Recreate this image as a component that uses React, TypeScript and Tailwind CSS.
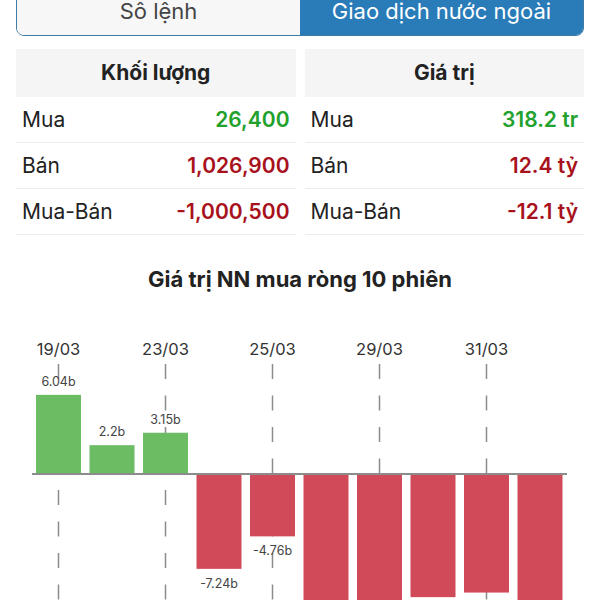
import React from 'react';

const volumeRows = [
  { label: 'Mua', value: '26,400', up: true },
  { label: 'Bán', value: '1,026,900', up: false },
  { label: 'Mua-Bán', value: '-1,000,500', up: false },
];

const valueRows = [
  { label: 'Mua', value: '318.2 tr', up: true },
  { label: 'Bán', value: '12.4 tỷ', up: false },
  { label: 'Mua-Bán', value: '-12.1 tỷ', up: false },
];

// net foreign buy value per session (billion)
const sessions = [6.04, 2.2, 3.15, -7.24, -4.76, -11.2, -11.6, -9.4, -9.05, -12.3];
const dates = ['19/03', '', '23/03', '', '25/03', '', '29/03', '', '31/03', ''];

const ZERO = 473;
const SCALE = 13.1;
const BAR_W = 45;

function StatTable({ title, rows }: { title: string; rows: typeof volumeRows }) {
  return (
    <div className="flex flex-col">
      <div className="h-[48px] bg-[#f5f5f5] flex items-center justify-center text-[21px] font-bold text-[#222]">
        {title}
      </div>
      {rows.map((r) => (
        <div key={r.label} className="h-[46px] flex items-center justify-between px-[6px] border-b border-[#ececec]">
          <span className="text-[21px] text-[#222]">{r.label}</span>
          <span className={`text-[21px] font-semibold ${r.up ? 'text-[#22a12c]' : 'text-[#a8121c]'}`}>{r.value}</span>
        </div>
      ))}
    </div>
  );
}

function NetChart() {
  return (
    <svg width="600" height="308" viewBox="0 292 600 308" className="block">
      {sessions.map((_, i) => {
        const cx = 36 + i * 53.5 + BAR_W / 2;
        if (!dates[i]) return null;
        return (
          <g key={'d' + i}>
            <text x={cx} y={354} textAnchor="middle" fontSize="16.5" fill="#333">
              {dates[i]}
            </text>
            <line x1={cx} x2={cx} y1={363} y2={600} stroke="#8c8c8c" strokeWidth="1.5" strokeDasharray="15 16.5" />
          </g>
        );
      })}
      {sessions.map((v, i) => {
        const x = 36 + i * 53.5;
        const h = Math.abs(v) * SCALE;
        const y = v >= 0 ? ZERO - h : ZERO;
        return (
          <rect key={'b' + i} x={x} y={y} width={BAR_W} height={h} fill={v >= 0 ? '#6cbc64' : '#d04a59'} />
        );
      })}
      <line x1={32} x2={567} y1={ZERO} y2={ZERO} stroke="#8c8c8c" strokeWidth="2" />
      {sessions.map((v, i) => {
        const cx = 36 + i * 53.5 + BAR_W / 2;
        const h = Math.abs(v) * SCALE;
        const y = v >= 0 ? ZERO - h - 9 : ZERO + h + 19;
        if (y > 596) return null; // below the visible area
        return (
          <text key={'l' + i} x={cx} y={y} textAnchor="middle" fontSize="12.5" fill="#444">
            {v.toString() + 'b'}
          </text>
        );
      })}
    </svg>
  );
}

export default function App() {
  return (
    <div className="w-[600px] h-[600px] overflow-hidden bg-white" style={{ fontFamily: 'Inter, "Noto Sans", sans-serif' }}>
      <div className="mx-4 mt-[-10px] h-[46px] flex rounded-b-[8px] overflow-hidden border border-[#3f7ba6]">
        <div className="flex-1 flex items-center justify-center pb-[3px] bg-[#f7f7f7] text-[22px] text-[#444]">Sô lệnh</div>
        <div className="flex-1 flex items-center justify-center pb-[3px] bg-[#2a7cb9] text-[22px] text-white">
          Giao dịch nước ngoài
        </div>
      </div>

      <div className="mt-[13px] px-4 grid grid-cols-2 gap-[9px]">
        <StatTable title="Khối lượng" rows={volumeRows} />
        <StatTable title="Giá trị" rows={valueRows} />
      </div>

      <div className="pt-[30px] text-center text-[22px] leading-[28px] font-bold text-[#222]">
        Giá trị NN mua ròng 10 phiên
      </div>

      <NetChart />
    </div>
  );
}
